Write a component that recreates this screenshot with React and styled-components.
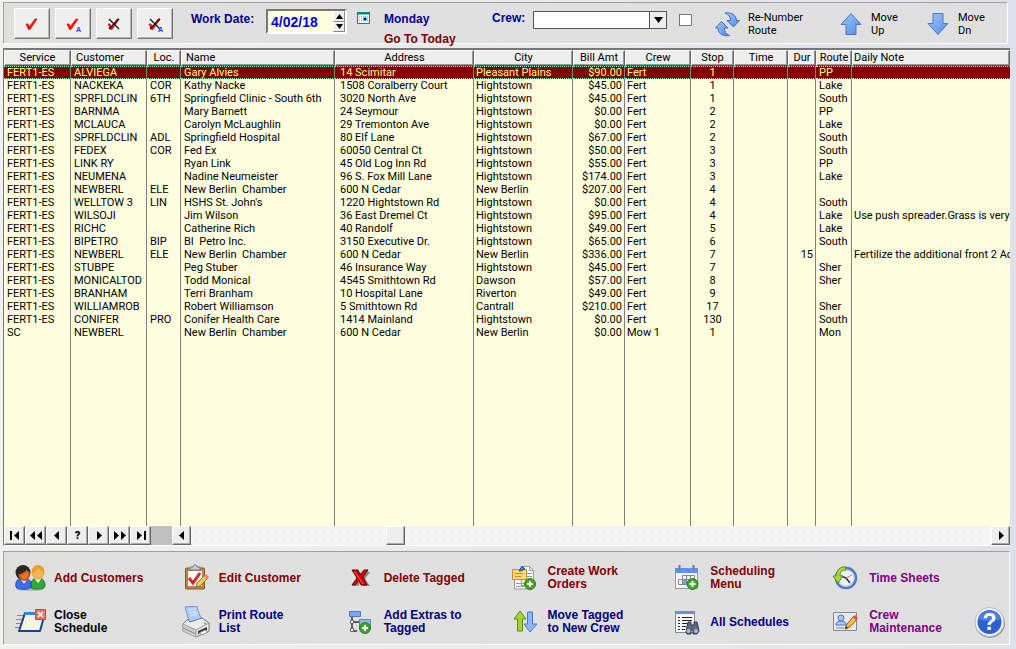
import { useState } from "react"
import styled, { createGlobalStyle } from "styled-components"

const boldFont = `"Liberation Sans", Arial, sans-serif`

const GlobalStyle = createGlobalStyle`
  * {
    box-sizing: border-box;
  }
  body {
    margin: 0;
    font-family: Roboto, "Liberation Sans", sans-serif;
    font-size: 11px;
    color: #000;
    background: linear-gradient(to right, #f1f1ee, #e9e9ec 60%, #dfe0ea);
  }
  button, input, select {
    font-family: inherit;
    font-size: inherit;
    color: inherit;
    margin: 0;
  }
`

const Page = styled.main`
  min-height: 100vh;
  padding: 2px 6px 4px 3px;
  display: flex;
  flex-direction: column;
`

const Panel = styled.section`
  background: #e0e0e0;
  border: 1px solid;
  border-color: #a0a0a0 #fff #fff #a0a0a0;
`

/* ---- top toolbar ---- */

const Toolbar = styled(Panel)`
  display: grid;
  grid-template-columns: 177fr 166fr 27fr 108fr 187fr 36fr 125fr 87fr 80fr;
  align-items: start;
  height: 42px;
  margin-right: 2px;
  padding: 5px 0 0 10px;
`

const TagButtons = styled.div`
  display: flex;
  gap: 5px;
`

const TagButton = styled.button`
  width: 36px;
  height: 31px;
  padding: 0;
  background: #efefef;
  border: 1px solid;
  border-color: #fff #777 #777 #fff;
  box-shadow: inset -1px -1px 0 #b4b4b4;
  svg {
    display: block;
    margin: auto;
  }
`

const Field = styled.div`
  display: flex;
  align-items: center;
`

const FieldLabel = styled.label`
  width: ${(p) => p.$width}px;
  padding-bottom: 4px;
  font-family: ${boldFont};
  font-size: 12px;
  font-weight: 700;
  color: #000090;
  white-space: nowrap;
`

const DateBox = styled.div`
  display: flex;
  width: 81px;
  height: 25px;
  margin-top: 1px;
  border: 2px solid;
  border-color: #777 #fff #fff #777;
  background: #ffffdf;
`

const DateInput = styled.input`
  flex: 1;
  min-width: 0;
  padding: 0 0 0 3px;
  border: 0;
  background: none;
  font-family: ${boldFont};
  font-size: 14px;
  font-weight: 700;
  color: #0000e0;
`

const Spinner = styled.div`
  display: grid;
  width: 12px;
  grid-template-rows: 1fr 1fr;
`

const SpinButton = styled.button`
  display: grid;
  place-items: center;
  padding: 0;
  min-height: 0;
  background: #eee;
  border: 1px solid;
  border-color: #fff #888 #888 #fff;
`

const CalendarButton = styled.button`
  padding: 4px 0 0;
  width: 14px;
  border: 0;
  background: none;
  svg {
    display: block;
  }
`

const Day = styled.div`
  display: flex;
  flex-direction: column;
  padding-top: 4px;
  font-family: ${boldFont};
  font-size: 12px;
  font-weight: 700;
  line-height: 14px;
  color: #000090;
`

const TodayLink = styled.a`
  margin-top: 6px;
  color: #800000;
  text-decoration: none;
  white-space: nowrap;
`

const SelectBox = styled.div`
  position: relative;
  width: 134px;
  height: 18px;
  margin: 3px 0;
  border: 1px solid #555;
  background: #fff;
`

const CrewSelect = styled.select`
  width: 100%;
  height: 16px;
  padding: 0 20px 0 3px;
  border: 0;
  appearance: none;
  background: none;
`

const SelectArrow = styled.span`
  position: absolute;
  top: 0;
  right: 0;
  display: grid;
  place-items: center;
  width: 17px;
  height: 16px;
  border-left: 1px solid #555;
  background: #eee;
  pointer-events: none;
`

const CheckBox = styled.input`
  appearance: none;
  width: 13px;
  height: 12px;
  margin: 6px 0 0;
  border: 1px solid #777;
  background: #fff;
  &:checked {
    background: #000090;
  }
`

const RouteButton = styled.button`
  display: flex;
  align-items: center;
  gap: ${(p) => p.$gap}px;
  padding: 3px 0 0;
  border: 0;
  background: none;
  line-height: 13px;
  text-align: left;
  white-space: pre;
`

/* ---- schedule grid ---- */

const GridFrame = styled.section`
  display: flex;
  flex: 1;
  flex-direction: column;
  margin: 4px 0 5px;
  border: 1px solid;
  border-color: #777 #fff #fff #777;
  border-top-width: 2px;
  border-right: 0;
  background: #ffffdf;
`

const TableArea = styled.div`
  display: flex;
  flex: 1;
  overflow: hidden;
`

const Table = styled.table`
  width: 100%;
  table-layout: fixed;
  border-collapse: separate;
  border-spacing: 0;
`

const HeadCell = styled.th`
  height: 16px;
  padding: 0 0 1px ${(p) => (p.$align === "left" ? 4 : 0)}px;
  background: #eee;
  border: 1px solid;
  border-color: #fff #666 #555 #fff;
  box-shadow: inset -1px -1px 0 #999;
  font-weight: 400;
  line-height: 13px;
  text-align: ${(p) => p.$align};
  white-space: nowrap;
  &:last-child {
    padding-left: 1px;
  }
`

const Cell = styled.td`
  height: 13px;
  padding: 0 2px 0 ${(p) => p.$pad || 3}px;
  border-right: 1px solid #808080;
  line-height: 13px;
  text-align: ${(p) => p.$align};
  white-space: pre;
  overflow: hidden;
  &:last-child {
    border-right: 0;
    padding-right: 0;
  }
`

const Row = styled.tr`
  height: 13px;
  ${(p) =>
    p.$selected &&
    `
    td {
      background: #800000;
      color: #ffff80;
      line-height: 11px;
      border-top: 1px dotted #7fffd4;
      border-bottom: 1px dotted #7fffd4;
    }
  `}
`

const FillerCell = styled.td`
  padding: 0;
  border-right: 1px solid #808080;
  &:last-child {
    border-right: 0;
  }
`

const ScrollRow = styled.div`
  display: flex;
  height: 19px;
  background: #c0c0c0;
`

const NavButton = styled.button`
  display: grid;
  place-items: center;
  flex: none;
  width: ${(p) => p.$width || 21}px;
  height: 19px;
  padding: 0;
  background: #eee;
  border: 1px solid;
  border-color: #fff #666 #666 #fff;
  box-shadow: inset -1px -1px 0 #aaa;
  font-weight: 900;
  line-height: 13px;
`

const ScrollBar = styled.input`
  appearance: none;
  flex: 1;
  min-width: 0;
  height: 19px;
  background: repeating-conic-gradient(#fff 0 25%, #eaeaea 0 50%) 0 0 / 2px 2px;
  &::-webkit-slider-thumb {
    appearance: none;
    width: 19px;
    height: 19px;
    background: #eee;
    border: 1px solid;
    border-color: #fff #666 #666 #fff;
    box-shadow: inset -1px -1px 0 #aaa;
  }
`

const Gap = styled.span`
  flex: none;
  width: 21px;
`

/* ---- bottom actions ---- */

const Actions = styled(Panel)`
  display: grid;
  grid-template-columns: 165fr 165fr 164fr 163fr 159fr 145fr 35fr;
  grid-template-rows: 44px 44px;
  grid-auto-flow: column;
  padding: 4px 0 0 10px;
`

const ActionButton = styled.button`
  display: flex;
  align-items: center;
  gap: 8px;
  padding: 0;
  border: 0;
  background: none;
  font-family: ${boldFont};
  font-size: 12px;
  font-weight: 700;
  line-height: 13px;
  text-align: left;
  white-space: pre;
  color: ${(p) => p.$color};
  svg {
    flex: none;
  }
`

const HelpButton = styled.button`
  grid-row: 2;
  padding: 0;
  border: 0;
  background: none;
  text-align: left;
  svg {
    display: block;
  }
`

const Icon = ({ children, size = 32, label }) => (
  <svg width={size} height={size} viewBox={`0 0 ${size} ${size}`} aria-hidden={!label} aria-label={label}>
    {children}
  </svg>
)

const TagIcon = ({ cross, all }) => (
  <svg width="20" height="20" viewBox="0 0 20 20" aria-hidden="true">
    <path d="M4 10l2 0 1.500 2.500L13 5h2l-7 10.500H6.500z" fill="#f01010" stroke="#f01010" strokeWidth="0.8" />
    {cross && <path d="M5 5l10 10M15 5L5 15" fill="none" stroke="#111" strokeWidth="1.2" />}
    {all && <text x="13" y="18" fontFamily="Liberation Sans, sans-serif" fontSize="7" fontWeight="700" fill="#1040f0">A</text>}
  </svg>
)

const Triangle = ({ d, w = 12, h = 9 }) => (
  <svg width={w} height={h} viewBox={`0 0 ${w} ${h}`} aria-hidden="true">
    <path d={d} />
  </svg>
)

const CalendarIcon = () => (
  <svg width="13" height="12" viewBox="0 0 13 12" aria-hidden="true">
    <path d="M0.500 0.500h12v11h-12z" fill="#fff" stroke="#108080" />
    <path d="M0 0h13v2.500H0z" fill="#108080" />
    <path d="M2 4.500h9M2 6.500h9M2 8.500h9" stroke="#aaa" strokeDasharray="1 1" />
    <circle cx="8" cy="7" r="2.200" fill="#30c0e8" />
    <path d="M7 6h2v2H7z" fill="#000080" />
  </svg>
)

const BlueFill = ({ id }) => (
  <linearGradient id={id} x1="0" y1="0" x2="1" y2="1">
    <stop offset="0" stopColor="#a4c8fc" />
    <stop offset="1" stopColor="#4f8ae8" />
  </linearGradient>
)

const RenumberIcon = () => (
  <svg width="25" height="25" viewBox="0 0 25 25" aria-hidden="true">
    <BlueFill id="renumber" />
    <path d="M10 1c7-1 11 2 11.500 7.500h3l-6 6.500-6.500-6.500h3.500c0-4-2-6-5.500-7.500z" fill="url(#renumber)" stroke="#3f6fbe" strokeLinejoin="round" />
    <path d="M14.500 23.500c-7 1-11.500-2-11.500-7.500H.5l6-6.500 6.500 6.500H9.500c0 4 1.500 6 5 7.500z" fill="url(#renumber)" stroke="#3f6fbe" strokeLinejoin="round" />
  </svg>
)

const ArrowIcon = ({ down }) => (
  <svg width="22" height="24" viewBox="0 0 22 24" aria-hidden="true">
    <BlueFill id={down ? "arrowDn" : "arrowUp"} />
    <path
      d={down ? "M6 1.500h10v10h5L11 22.500 1 11.500h5z" : "M11 1.500l10 11h-5v10H6v-10H1z"}
      fill={down ? "url(#arrowDn)" : "url(#arrowUp)"}
      stroke="#4a79c4"
      strokeLinejoin="round"
    />
  </svg>
)

const PlusBadge = ({ x, y }) => (
  <g>
    <circle cx={x} cy={y} r="5.500" fill="#3fa62c" stroke="#2b7d1c" />
    <path d={`M${x - 3} ${y}h6M${x} ${y - 3}v6`} stroke="#fff" strokeWidth="2" />
  </g>
)

const UsersIcon = () => (
  <Icon>
    <ellipse cx="16" cy="27" rx="14" ry="2" fill="#bbb" />
    <path d="M17 26c-1-7 2-10 7-10 5 0 7 3 7 8 0 2-3 3-7 3s-6 0-7-1z" fill="#35a83c" stroke="#1c7a26" />
    <path d="M21 17l3 4 3-4z" fill="#fff" />
    <ellipse cx="24" cy="10" rx="6.500" ry="7" fill="#e8a020" />
    <path d="M18.500 11c3-1 5-3 6-5 1 2 3 3 5 4 0 5-2 8-5 8-4 0-6-3-6-7z" fill="#f4b45c" />
    <path d="M2 25c-1-6 2-9 7-9 6 0 9 3 8 9-1 3-14 3-15 0z" fill="#3f6de8" stroke="#2248b4" />
    <path d="M7 18l3 4 3-4z" fill="#cfe0ff" />
    <circle cx="9" cy="10.500" r="7.500" fill="#2a2626" />
    <path d="M4.500 12c3 0 6-2 8-4l3 2c1 5-1 9-5 9s-6-3-6-7z" fill="#c85a18" />
    <path d="M7 13c3 0 5-2 6-4 2 3 1 7-2 8-2 0-4-1-4-4z" fill="#e87a24" />
  </Icon>
)

const CloseIcon = () => (
  <Icon>
    <path d="M3 9.500h7M2 13.500h6M2 17.500h5M1 21.500h4" stroke="#888" />
    <path d="M11 7h20l-5 18H5z" fill="#f4f6e8" stroke="#1b4486" strokeWidth="2" strokeLinejoin="round" />
    <path d="M11 6h14v3H10z" fill="#3c86e0" />
    <path d="M21.500 3.500h10v10h-10z" fill="#e8746a" stroke="#c04848" />
    <path d="M24 6l5 5M29 6l-5 5" stroke="#fff" strokeWidth="1.500" />
  </Icon>
)

const ClipboardIcon = () => (
  <Icon>
    <rect x="6.500" y="6" width="19" height="21" rx="1" fill="#b8834a" stroke="#85592c" />
    <path d="M9 9h14v15H9z" fill="#f8f8fb" />
    <path d="M11 8V5h3c0-3 4-3 4 0h3v3z" fill="#ccc" stroke="#777" />
    <path d="M10 16l4 5 7-10" fill="none" stroke="#d32828" strokeWidth="3" />
    <path d="M17 25l1-4 8-8 3 3-8 8z" fill="#f7c948" stroke="#9a7421" />
    <path d="M25 14l2-2 3 3-2 2z" fill="#e88080" />
  </Icon>
)

const PrinterIcon = () => (
  <Icon>
    <path d="M6 1l12-1c1 5 2 9 5 13l-12 3C8 12 8 6 6 1z" fill="#a8ceff" stroke="#6d96d8" />
    <path d="M9 4l8-1M10 7l8-1M11 10l8-2" stroke="#e2f0ff" />
    <path d="M4 18l5-5 2 3 12-4 7 5v8l-13 6-13-6z" fill="#ececec" stroke="#777" strokeLinejoin="round" />
    <path d="M4 18l13 6v7L4 25z" fill="#cdcdcd" />
    <path d="M4 18l13 6 13-7M17 24v7" fill="none" stroke="#999" />
    <path d="M4 22l13 6" stroke="#888" />
    <path d="M19 25l9-4v3l-9 4z" fill="#333" />
    <path d="M20 27l6-3 3 2-6 3z" fill="#fff" stroke="#888" />
    <circle cx="26" cy="17.500" r="1" fill="#4b4" />
  </Icon>
)

const DeleteIcon = () => (
  <Icon>
    <path d="M10 10h6l3 4 3-4h4l-5 7 5 7h-6l-3-4-3 4h-4l5-7z" fill="#888" />
    <path d="M8 8h6l2 5 4-5h4l-5 7 4 8h-6l-2-5-4 5H8l5-7z" fill="#e00000" stroke="#500" strokeWidth="1" />
    <path d="M10 9l9 13" stroke="#f66" strokeWidth="1" />
  </Icon>
)

const ExtrasIcon = () => (
  <Icon>
    <path d="M8 10v15h5M8 16h8" fill="none" stroke="#333" strokeWidth="1.500" />
    <path d="M5.500 5.500h11v5h-11z" fill="#79a9ee" stroke="#4a79c4" />
    <path d="M15.500 13.500h11v8h-11z" fill="#8fb8f4" stroke="#5a86cc" />
    <path d="M6.500 14.500h3v3h-3zM6.500 22.500h3v3h-3z" fill="#fff" stroke="#666" />
    <PlusBadge x={21} y={22} />
  </Icon>
)

const WorkOrderIcon = () => (
  <Icon>
    <path d="M6.500 17h12v10h-12z" fill="#f3f5f8" stroke="#999" />
    <path d="M13.500 4.500h8l4 4v15h-12z" fill="#f7f7f7" stroke="#999" />
    <path d="M21.500 4.500v4h4" fill="none" stroke="#999" />
    <path d="M19 11.500h5M19 14.500h5M8 21.500h8M8 24.500h8" stroke="#999" />
    <path d="M4.500 7.500h14v10h-14z" fill="#fbd872" stroke="#b89335" />
    <path d="M7 11.500h8M7 14.500h6" stroke="#b89335" />
    <path d="M11 9l3-5 3 3-4 2z" fill="#4a78d8" stroke="#2a50a0" />
    <PlusBadge x={22} y={22} />
  </Icon>
)

const SwapIcon = () => (
  <Icon>
    <path d="M12 5l6 8h-3.500v12h-5V13H6z" fill="#a4d434" stroke="#5c8a1c" strokeLinejoin="round" />
    <path d="M19.500 6h5v12H29l-7 8-6-8h3.500z" fill="#8db8f6" stroke="#4a79c4" strokeLinejoin="round" />
  </Icon>
)

const SchedulingIcon = () => (
  <Icon>
    <path d="M5.500 6.500h22v20h-22z" fill="#f2f4f7" stroke="#999" />
    <path d="M5 6h23v5H5z" fill="#5c93e6" />
    <path d="M9.500 3v5M23.500 3v5" stroke="#777" strokeWidth="2" />
    <path d="M12.500 13.500h12v4h-12zM8.500 17.500h12v5h-12zM12.500 13.500v9M16.500 13.500v9M20.500 13.500v9" fill="none" stroke="#888" />
    <path d="M13 18h3v4h-3z" fill="#67a8f0" />
    <PlusBadge x={22.500} y={22} />
  </Icon>
)

const AllSchedulesIcon = () => (
  <Icon>
    <path d="M5.500 5.500h19v21h-19z" fill="#f8f8f8" stroke="#888" />
    <path d="M5 5h20v3H5z" fill="#5c93e6" />
    <path d="M8 11.500h2M12 11.500h10M8 14.500h2M12 14.500h10M8 17.500h2M12 17.500h5M8 20.500h2M12 20.500h4M8 23.500h2M12 23.500h3" stroke="#222" />
    <path d="M18 16h3v3h3v-3h3l2 9-2 3h-4v-4h-2v4h-4l-1-2z" fill="#5d6880" stroke="#303848" />
    <circle cx="18.500" cy="25" r="2" fill="#aeb9cf" />
    <circle cx="26" cy="25" r="2" fill="#aeb9cf" />
  </Icon>
)

const ClockIcon = () => (
  <Icon>
    <circle cx="17" cy="16" r="10" fill="#eef3fb" stroke="#5279c0" strokeWidth="2.500" />
    <circle cx="17" cy="16" r="8" fill="none" stroke="#b9cbe8" />
    <path d="M17 16l4 5M17 16l-5-2" stroke="#333" strokeWidth="1.500" />
    <path d="M17 16l6-3" stroke="#e07070" />
    <path d="M17 5c-6-1-10 4-10 9H4l5 7 5-7h-3c0-4 2-6 6-6z" fill="#a8d840" stroke="#5c8a1c" strokeLinejoin="round" />
  </Icon>
)

const CrewIcon = () => (
  <Icon>
    <path d="M4.500 6.500h23v18h-23z" fill="#e6e9ee" stroke="#888" />
    <circle cx="12" cy="12" r="3" fill="#a8c8f6" stroke="#4a79c4" />
    <path d="M7 19c0-3 2-4 5-4s5 1 5 4z" fill="#a8c8f6" stroke="#4a79c4" />
    <path d="M7 22h8" stroke="#888" />
    <path d="M16 23l2-5 7-8 3 3-7 8z" fill="#f7c040" stroke="#8a5a20" />
    <path d="M24 11l2-2 3 3-2 2z" fill="#e05050" />
    <path d="M16 23l1-3 2 2z" fill="#333" />
  </Icon>
)

const HelpIcon = () => (
  <Icon label="Help">
    <circle cx="16" cy="17" r="15" fill="#8b93a4" />
    <circle cx="15.500" cy="16" r="14.500" fill="#f4f5f8" stroke="#b8bcc8" />
    <circle cx="15.500" cy="16" r="12" fill="#2b62d0" />
    <path d="M4 13c3-11 20-11 23 0-7 3-16 3-23 0z" fill="#4a7ee0" />
    <text x="15.500" y="24" textAnchor="middle" fontFamily="Liberation Sans, sans-serif" fontSize="23" fontWeight="700" fill="#fff">?</text>
  </Icon>
)

const columns = [
  { name: "Service", width: 67, head: "center" },
  { name: "Customer", width: 76, head: "left" },
  { name: "Loc.", width: 34, head: "center" },
  { name: "Name", width: 154, head: "left" },
  { name: "Address", width: 139, head: "center", pad: 5 },
  { name: "City", width: 99, head: "center", pad: 2 },
  { name: "Bill Amt", width: 52, head: "center", align: "right" },
  { name: "Crew", width: 66, head: "center", pad: 2 },
  { name: "Stop", width: 43, head: "center", align: "center" },
  { name: "Time", width: 54, head: "center" },
  { name: "Dur", width: 28, head: "center", align: "right" },
  { name: "Route", width: 36, head: "center" },
  { name: "Daily Note", head: "left", pad: 2 },
]

const rows = [
  ["FERT1-ES", "ALVIEGA", "", "Gary Alvies", "14 Scimitar", "Pleasant Plains", "$90.00", "Fert", "1", "", "", "PP", ""],
  ["FERT1-ES", "NACKEKA", "COR", "Kathy Nacke", "1508 Coralberry Court", "Hightstown", "$45.00", "Fert", "1", "", "", "Lake", ""],
  ["FERT1-ES", "SPRFLDCLIN", "6TH", "Springfield Clinic - South 6th", "3020 North Ave", "Hightstown", "$45.00", "Fert", "1", "", "", "South", ""],
  ["FERT1-ES", "BARNMA", "", "Mary Barnett", "24 Seymour", "Hightstown", "$0.00", "Fert", "2", "", "", "PP", ""],
  ["FERT1-ES", "MCLAUCA", "", "Carolyn McLaughlin", "29 Tremonton Ave", "Hightstown", "$0.00", "Fert", "2", "", "", "Lake", ""],
  ["FERT1-ES", "SPRFLDCLIN", "ADL", "Springfield Hospital", "80 Elf Lane", "Hightstown", "$67.00", "Fert", "2", "", "", "South", ""],
  ["FERT1-ES", "FEDEX", "COR", "Fed Ex", "60050 Central Ct", "Hightstown", "$50.00", "Fert", "3", "", "", "South", ""],
  ["FERT1-ES", "LINK RY", "", "Ryan Link", "45 Old Log Inn Rd", "Hightstown", "$55.00", "Fert", "3", "", "", "PP", ""],
  ["FERT1-ES", "NEUMENA", "", "Nadine Neumeister", "96 S. Fox Mill Lane", "Hightstown", "$174.00", "Fert", "3", "", "", "Lake", ""],
  ["FERT1-ES", "NEWBERL", "ELE", "New Berlin  Chamber", "600 N Cedar", "New Berlin", "$207.00", "Fert", "4", "", "", "", ""],
  ["FERT1-ES", "WELLTOW 3", "LIN", "HSHS St. John's", "1220 Hightstown Rd", "Hightstown", "$0.00", "Fert", "4", "", "", "South", ""],
  ["FERT1-ES", "WILSOJI", "", "Jim Wilson", "36 East Dremel Ct", "Hightstown", "$95.00", "Fert", "4", "", "", "Lake", "Use push spreader.Grass is very"],
  ["FERT1-ES", "RICHC", "", "Catherine Rich", "40 Randolf", "Hightstown", "$49.00", "Fert", "5", "", "", "Lake", ""],
  ["FERT1-ES", "BIPETRO", "BIP", "BI  Petro Inc.", "3150 Executive Dr.", "Hightstown", "$65.00", "Fert", "6", "", "", "South", ""],
  ["FERT1-ES", "NEWBERL", "ELE", "New Berlin  Chamber", "600 N Cedar", "New Berlin", "$336.00", "Fert", "7", "", "15", "", "Fertilize the additional front 2 Acre"],
  ["FERT1-ES", "STUBPE", "", "Peg Stuber", "46 Insurance Way", "Hightstown", "$45.00", "Fert", "7", "", "", "Sher", ""],
  ["FERT1-ES", "MONICALTOD", "", "Todd Monical", "4545 Smithtown Rd", "Dawson", "$57.00", "Fert", "8", "", "", "Sher", ""],
  ["FERT1-ES", "BRANHAM", "", "Terri Branham", "10 Hospital Lane", "Riverton", "$49.00", "Fert", "9", "", "", "", ""],
  ["FERT1-ES", "WILLIAMROB", "", "Robert Williamson", "5 Smithtown Rd", "Cantrall", "$210.00", "Fert", "17", "", "", "Sher", ""],
  ["FERT1-ES", "CONIFER", "PRO", "Conifer Health Care", "1414 Mainland", "Hightstown", "$0.00", "Fert", "130", "", "", "South", ""],
  ["SC", "NEWBERL", "", "New Berlin  Chamber", "600 N Cedar", "New Berlin", "$0.00", "Mow 1", "1", "", "", "Mon", ""],
]

const navButtons = [
  { label: "First", d: "M1 0h2v9H1zM10 0v9L5 4.500z" },
  { label: "Previous page", d: "M5 0v9L0 4.500zM12 0v9L7 4.500z" },
  { label: "Previous", d: "M8 0v9L3 4.500z" },
  { label: "Locate" },
  { label: "Next", d: "M4 0v9l5-4.500z" },
  { label: "Next page", d: "M0 0v9l5-4.500zM7 0v9l5-4.500z" },
  { label: "Last", d: "M2 0v9l5-4.500zM9 0h2v9H9z" },
]

const maroon = "#800000"
const navy = "#000080"
const purple = "#800080"

const actions = [
  { text: "Add Customers", icon: UsersIcon, color: maroon },
  { text: "Close\nSchedule", icon: CloseIcon, color: "#000" },
  { text: "Edit Customer", icon: ClipboardIcon, color: maroon },
  { text: "Print Route\nList", icon: PrinterIcon, color: navy },
  { text: "Delete Tagged", icon: DeleteIcon, color: maroon },
  { text: "Add Extras to\nTagged", icon: ExtrasIcon, color: navy },
  { text: "Create Work\nOrders", icon: WorkOrderIcon, color: maroon },
  { text: "Move Tagged\nto New Crew", icon: SwapIcon, color: navy },
  { text: "Scheduling\nMenu", icon: SchedulingIcon, color: maroon },
  { text: "All Schedules", icon: AllSchedulesIcon, color: navy },
  { text: "Time Sheets", icon: ClockIcon, color: purple },
  { text: "Crew\nMaintenance", icon: CrewIcon, color: purple },
]

const TopBar = () => (
  <Toolbar>
    <TagButtons>
      <TagButton aria-label="Tag"><TagIcon /></TagButton>
      <TagButton aria-label="Tag all"><TagIcon all /></TagButton>
      <TagButton aria-label="Untag"><TagIcon cross /></TagButton>
      <TagButton aria-label="Untag all"><TagIcon cross all /></TagButton>
    </TagButtons>
    <Field>
      <FieldLabel htmlFor="workDate" $width={75}>Work Date:</FieldLabel>
      <DateBox>
        <DateInput id="workDate" defaultValue="4/02/18" />
        <Spinner>
          <SpinButton aria-label="Next day"><Triangle w={7} h={5} d="M3.500 0L7 5H0z" /></SpinButton>
          <SpinButton aria-label="Previous day"><Triangle w={7} h={5} d="M0 0h7L3.500 5z" /></SpinButton>
        </Spinner>
      </DateBox>
    </Field>
    <CalendarButton aria-label="Pick a date"><CalendarIcon /></CalendarButton>
    <Day>
      <span>Monday</span>
      <TodayLink href="#today">Go To Today</TodayLink>
    </Day>
    <Field>
      <FieldLabel htmlFor="crew" $width={41}>Crew:</FieldLabel>
      <SelectBox>
        <CrewSelect id="crew" defaultValue="">
          <option value=""></option>
          <option>Fert</option>
          <option>Mow 1</option>
        </CrewSelect>
        <SelectArrow><Triangle w={9} h={6} d="M0 0h9L4.500 6z" /></SelectArrow>
      </SelectBox>
    </Field>
    <CheckBox type="checkbox" aria-label="Filter by crew" />
    <RouteButton $gap={8}><RenumberIcon />{"Re-Number\nRoute"}</RouteButton>
    <RouteButton $gap={9}><ArrowIcon />{"Move\nUp"}</RouteButton>
    <RouteButton $gap={9}><ArrowIcon down />{"Move\nDn"}</RouteButton>
  </Toolbar>
)

const Schedule = () => {
  const [selected, setSelected] = useState(0)

  return (
    <GridFrame>
      <TableArea>
        <Table>
          <colgroup>
            {columns.map((c) => (
              <col key={c.name} width={c.width} />
            ))}
          </colgroup>
          <thead>
            <tr>
              {columns.map((c) => (
                <HeadCell key={c.name} $align={c.head}>{c.name}</HeadCell>
              ))}
            </tr>
          </thead>
          <tbody>
            {rows.map((row, i) => (
              <Row key={i} $selected={i === selected} onClick={() => setSelected(i)}>
                {row.map((value, j) => (
                  <Cell key={j} $align={columns[j].align || "left"} $pad={columns[j].pad}>{value}</Cell>
                ))}
              </Row>
            ))}
            <tr>
              {columns.map((c) => (
                <FillerCell key={c.name} />
              ))}
            </tr>
          </tbody>
        </Table>
      </TableArea>
      <ScrollRow>
        {navButtons.map((b) => (
          <NavButton key={b.label} aria-label={b.label}>{b.d ? <Triangle d={b.d} /> : "?"}</NavButton>
        ))}
        <Gap />
        <NavButton $width={19} aria-label="Scroll left"><Triangle d="M8 0v9L3 4.500z" /></NavButton>
        <ScrollBar type="range" defaultValue="25" aria-label="Scroll columns" />
        <NavButton $width={19} aria-label="Scroll right"><Triangle d="M4 0v9l5-4.500z" /></NavButton>
      </ScrollRow>
    </GridFrame>
  )
}

const App = () => {
  return (
    <>
      <GlobalStyle />
      <Page>
        <TopBar />
        <Schedule />
        <Actions>
          {actions.map(({ text, icon: ActionIcon, color }) => (
            <ActionButton key={text} $color={color}>
              <ActionIcon />
              {text}
            </ActionButton>
          ))}
          <HelpButton><HelpIcon /></HelpButton>
        </Actions>
      </Page>
    </>
  )
}

export default App
